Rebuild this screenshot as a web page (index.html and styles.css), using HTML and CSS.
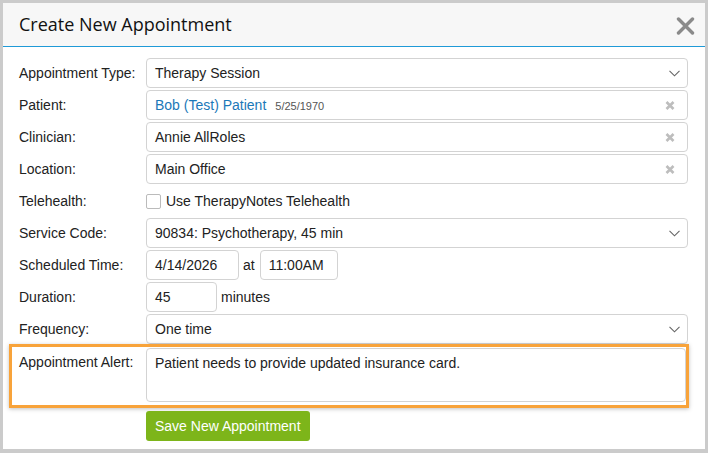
FILE: index.html
```html
<!DOCTYPE html>
<html lang="en">

<head>
    <meta charset="UTF-8">
    <meta name="viewport" content="width=device-width, initial-scale=1.0">
    <title>Create New Appointment</title>
    <link rel="stylesheet" href="styles.css">
</head>

<body>
    <div class="dialog">
        <div class="dialog-header">
            <h2>Create New Appointment</h2>
            <button class="close-btn" type="button" aria-label="Close">
                <svg width="19" height="18" viewBox="0 0 19 18">
                    <path d="M2.5 2 L16.5 16 M16.5 2 L2.5 16" stroke="#8a8a8a" stroke-width="3.4" stroke-linecap="round" fill="none" />
                </svg>
            </button>
        </div>

        <form class="appt-form">
            <div class="form-row">
                <label>Appointment Type:</label>
                <div class="field">
                    <span class="field-text">Therapy Session</span>
                    <svg class="chevron" width="11" height="7" viewBox="0 0 11 7">
                        <path d="M0.5 0.8 L5.5 5.8 L10.5 0.8" stroke="#666" stroke-width="1.1" fill="none" />
                    </svg>
                </div>
            </div>

            <div class="form-row">
                <label>Patient:</label>
                <div class="field">
                    <span class="field-text patient-link">Bob (Test) Patient</span>
                    <span class="dob">5/25/1970</span>
                    <svg class="remove" width="10" height="9" viewBox="0 0 10 9">
                        <path d="M1.5 1 L8.5 8 M8.5 1 L1.5 8" stroke="#bdbdbd" stroke-width="2.6" fill="none" />
                    </svg>
                </div>
            </div>

            <div class="form-row">
                <label>Clinician:</label>
                <div class="field">
                    <span class="field-text">Annie AllRoles</span>
                    <svg class="remove" width="10" height="9" viewBox="0 0 10 9">
                        <path d="M1.5 1 L8.5 8 M8.5 1 L1.5 8" stroke="#bdbdbd" stroke-width="2.6" fill="none" />
                    </svg>
                </div>
            </div>

            <div class="form-row">
                <label>Location:</label>
                <div class="field">
                    <span class="field-text">Main Office</span>
                    <svg class="remove" width="10" height="9" viewBox="0 0 10 9">
                        <path d="M1.5 1 L8.5 8 M8.5 1 L1.5 8" stroke="#bdbdbd" stroke-width="2.6" fill="none" />
                    </svg>
                </div>
            </div>

            <div class="form-row">
                <label>Telehealth:</label>
                <div class="inline-group">
                    <span class="checkbox"></span>
                    <span class="check-label">Use TherapyNotes Telehealth</span>
                </div>
            </div>

            <div class="form-row">
                <label>Service Code:</label>
                <div class="field">
                    <span class="field-text">90834: Psychotherapy, 45 min</span>
                    <svg class="chevron" width="11" height="7" viewBox="0 0 11 7">
                        <path d="M0.5 0.8 L5.5 5.8 L10.5 0.8" stroke="#666" stroke-width="1.1" fill="none" />
                    </svg>
                </div>
            </div>

            <div class="form-row">
                <label>Scheduled Time:</label>
                <div class="inline-group">
                    <div class="field date-field">4/14/2026</div>
                    <span class="at">at</span>
                    <div class="field time-field">11:00AM</div>
                </div>
            </div>

            <div class="form-row">
                <label>Duration:</label>
                <div class="inline-group">
                    <div class="field duration-field">45</div>
                    <span class="unit">minutes</span>
                </div>
            </div>

            <div class="form-row">
                <label>Frequency:</label>
                <div class="field">
                    <span class="field-text">One time</span>
                    <svg class="chevron" width="11" height="7" viewBox="0 0 11 7">
                        <path d="M0.5 0.8 L5.5 5.8 L10.5 0.8" stroke="#666" stroke-width="1.1" fill="none" />
                    </svg>
                </div>
            </div>

            <div class="form-row alert-row">
                <label>Appointment Alert:</label>
                <div class="field textarea">Patient needs to provide updated insurance card.</div>
            </div>

            <div class="actions">
                <button class="save-btn" type="button">Save New Appointment</button>
            </div>
        </form>
    </div>
</body>

</html>
```

FILE: styles.css
```css
* {
    margin: 0;
    padding: 0;
    box-sizing: border-box;
}

body {
    font-family: 'Liberation Sans', Arial, sans-serif;
    font-size: 14px;
    color: #222;
    background: #cbcbcb;
    padding: 3px;
}

.dialog {
    background: #fff;
    width: 702px;
    height: 446px;
}

.dialog-header {
    height: 44px;
    background: #f7f7f7;
    border-bottom: 1px solid #1f9ad7;
    display: flex;
    align-items: center;
    justify-content: space-between;
    padding: 0 9px 0 16px;
}

.dialog-header h2 {
    font-family: 'Open Sans', sans-serif;
    font-weight: normal;
    font-size: 18px;
    color: #111;
    margin-top: -1px;
}

.close-btn {
    background: none;
    border: none;
    width: 21px;
    height: 20px;
    display: flex;
    align-items: center;
    justify-content: center;
    margin-top: 2px;
}

.appt-form {
    padding: 11px 17px 0 16px;
    display: flex;
    flex-direction: column;
    gap: 2px;
}

.form-row {
    display: grid;
    grid-template-columns: 127px 1fr;
    align-items: center;
    min-height: 30px;
}

.form-row label {
    color: #222;
}

.field {
    height: 30px;
    border: 1px solid #d3d3d3;
    border-radius: 4px;
    padding: 0 8px;
    display: flex;
    align-items: center;
    background: #fff;
}

.field-text {
    white-space: nowrap;
}

.patient-link {
    color: #1b78b8;
}

.dob {
    font-size: 11px;
    color: #555;
    margin-left: 9px;
    margin-top: 1px;
}

.chevron {
    margin-left: auto;
    margin-right: -1px;
}

.remove {
    margin-left: auto;
    margin-right: 4px;
}

.inline-group {
    display: flex;
    align-items: center;
    height: 30px;
}

.checkbox {
    width: 15px;
    height: 15px;
    border: 1px solid #bbb;
    border-radius: 2px;
    background: #fff;
}

.check-label {
    margin-left: 5px;
}

.date-field {
    width: 93px;
}

.at {
    margin: 0 5px 0 4px;
}

.time-field {
    width: 78px;
}

.duration-field {
    width: 71px;
}

.unit {
    margin-left: 4px;
}

.alert-row {
    align-items: start;
    margin: -2px -1px 0 -10px;
    padding: 1px 0 3px 7px;
    border: 3px solid #f8a33a;
    box-shadow: 0 1px 4px rgba(0, 0, 0, 0.25);
}

.alert-row label {
    padding-top: 6px;
}

.textarea {
    height: 54px;
    align-items: flex-start;
    padding-top: 6px;
}

.actions {
    padding-left: 127px;
    margin-top: 1px;
}

.save-btn {
    font-family: 'Liberation Sans', Arial, sans-serif;
    font-size: 14px;
    color: #fff;
    background: #7db51a;
    border: none;
    border-radius: 3px;
    height: 30px;
    padding: 0 9px;
}
```
